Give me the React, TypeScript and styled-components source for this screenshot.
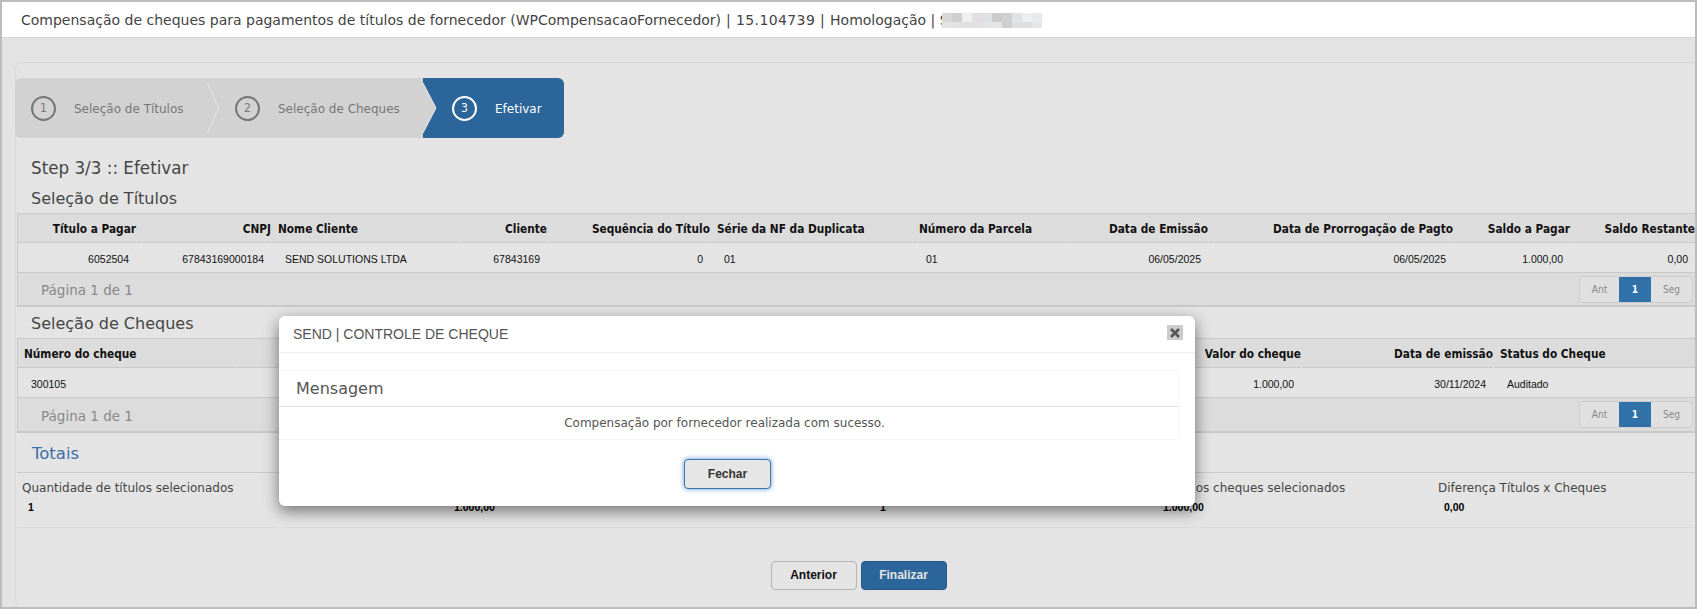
import React from "react";
import styled, { createGlobalStyle } from "styled-components";

const cond = `"DejaVu Sans Condensed", "DejaVu Sans", sans-serif`;
const sans = `"DejaVu Sans", sans-serif`;
const arial = `"Liberation Sans", Arial, sans-serif`;

const Global = createGlobalStyle`
  html, body { margin: 0; padding: 0; background: #bbb; }
  * { box-sizing: border-box; }
`;

const Page = styled.div`
  position: relative;
  width: 1697px;
  height: 609px;
  overflow: hidden;
  border: 2px solid #bcbcbc;
  background: #e3e3e3;
  font-family: ${sans};
  display: flex;
  flex-direction: column;
`;
const TopBar = styled.header`
  height: 36px;
  flex: none;
  background: #fff;
  border-bottom: 1px solid #d6d6d6;
  padding: 1px 0 0 19px;
  display: flex;
  align-items: center;
  font-size: 14px;
  color: #444;
  white-space: pre;
`;
const Version = styled.span`
  letter-spacing: 0.4px;
`;
const Mosaic = styled.span`
  position: relative;
  display: grid;
  grid-template-columns: repeat(10, 10px);
  grid-template-rows: 9px 6px;
  margin-left: -7px;
`;
const Tile = styled.i<{ $c: string }>`
  display: block;
  background: ${(p) => p.$c};
`;
const Panel = styled.main`
  margin: 24px 0 0 13px;
  flex: 1;
  min-height: 0;
  border: 1px solid #d8d8d8;
  border-right: none;
  border-bottom: none;
  border-radius: 6px 0 0 6px;
  background: #e4e4e4;
  padding-top: 15px;
  display: flex;
  flex-direction: column;
`;
const Wizard = styled.nav`
  display: flex;
  width: 549px;
  height: 60px;
  margin-left: -1px;
  flex: none;
`;
const Step = styled.div<{ $w: number; $active?: boolean; $first?: boolean }>`
  position: relative;
  width: ${(p) => p.$w}px;
  display: flex;
  align-items: center;
  background: ${(p) => (p.$active ? "#2b6599" : "#d2d2d2")};
  color: ${(p) => (p.$active ? "#fff" : "#777")};
  border-radius: ${(p) => (p.$first ? "6px 0 0 6px" : p.$active ? "0 6px 6px 0" : "0")};
  padding-left: ${(p) => (p.$first ? 16 : p.$active ? 29 : 28)}px;
  font-size: 12px;
`;
const StepLabel = styled.span`
  padding-top: 1px;
`;
const Circle = styled.span`
  width: 25px;
  height: 25px;
  border-radius: 50%;
  border: 2px solid currentColor;
  display: flex;
  align-items: center;
  justify-content: center;
  font-size: 12px;
  font-family: ${cond};
  margin-right: 18px;
`;
const Chevron = styled.svg<{ $l: number }>`
  position: absolute;
  top: 0;
  left: ${(p) => p.$l}px;
  z-index: 1;
`;
const StepTitle = styled.h2`
  margin: 19px 0 0 15px;
  font-size: 16.75px;
  line-height: 22px;
  font-weight: 400;
  color: #444;
`;
const SectionTitle = styled.h3<{ $gap: number }>`
  margin: ${(p) => p.$gap}px 0 0 15px;
  font-size: 16px;
  line-height: 22px;
  font-weight: 400;
  color: #444;
`;
const GridTable = styled.table`
  table-layout: fixed;
  border-collapse: separate;
  border-spacing: 0;
  margin: 3px 0 0 1px;
  width: 1678px;
  border-top: 1px solid #c9c9c9;
  border-left: 1px solid #c9c9c9;
  flex: none;
`;
const Th = styled.th<{ $a?: "left" | "right" }>`
  position: relative;
  height: 29px;
  padding: 2px ${(p) => (p.$a === "right" ? "1px" : "0")} 0 ${(p) => (p.$a === "right" ? "0" : "6px")};
  text-align: ${(p) => p.$a ?? "left"};
  background: #dcdcdc;
  border-bottom: 1px solid #c9c9c9;
  font-family: ${cond};
  font-size: 11.75px;
  font-weight: 700;
  color: #111;
  white-space: nowrap;
  &::after {
    content: "";
    position: absolute;
    right: -1px;
    bottom: -1px;
    width: 2px;
    height: 1px;
    background: #e6e6e6;
  }
`;
const Td = styled.td<{ $a?: "left" | "right" }>`
  height: 30px;
  padding: 2px ${(p) => (p.$a === "right" ? "8px" : "0")} 0 ${(p) => (p.$a === "right" ? "0" : "13px")};
  text-align: ${(p) => p.$a ?? "left"};
  border-bottom: 1px solid #c9c9c9;
  font-family: ${arial};
  font-size: 10.5px;
  color: #111;
  white-space: nowrap;
`;
const Pager = styled.div<{ $h: number }>`
  height: ${(p) => p.$h}px;
  margin-left: 1px;
  width: 1678px;
  flex: none;
  display: flex;
  align-items: center;
  justify-content: space-between;
  background: #dcdcdc;
  border-left: 1px solid #c9c9c9;
  border-bottom: 2px solid #c9c9c9;
  padding: 0 2px 0 23px;
  font-size: 13.5px;
  color: #888;
`;
const PagerLabel = styled.span`
  padding-top: 2px;
`;
const PageButtons = styled.div`
  display: flex;
  height: 27px;
  border: 1px solid #cdcdcd;
  border-radius: 4px;
  background: #e0e0e0;
  overflow: hidden;
`;
const PageButton = styled.span<{ $w: number; $on?: boolean }>`
  width: ${(p) => p.$w}px;
  display: flex;
  align-items: center;
  justify-content: center;
  font-family: ${cond};
  font-size: 10px;
  font-weight: ${(p) => (p.$on ? 700 : 400)};
  color: ${(p) => (p.$on ? "#fff" : "#888")};
  background: ${(p) => (p.$on ? "#3071a9" : "transparent")};
`;
const Totals = styled.section`
  margin-left: 1px;
  flex: none;
`;
const TotalsTitle = styled.h3`
  margin: 0;
  height: 40px;
  padding: 10px 0 0 15px;
  font-size: 16.5px;
  line-height: 22px;
  font-weight: 400;
  color: #3a6ea5;
  border-bottom: 1px solid #cacaca;
`;
const TotalsRow = styled.div`
  display: grid;
  grid-template-columns: 426px 426px 280px 284px 1fr;
  height: 55px;
  padding: 7px 0 0 5px;
  border-bottom: 1px solid #dcdcdc;
`;
const TotalCell = styled.div`
  display: flex;
  flex-direction: column;
`;
const TotalLabel = styled.span`
  font-size: 12px;
  line-height: 16px;
  color: #444;
  white-space: nowrap;
`;
const TotalValue = styled.strong<{ $indent: number }>`
  font-family: ${arial};
  font-size: 10.5px;
  line-height: 14px;
  margin: 4px 0 0 ${(p) => p.$indent}px;
  color: #000;
`;
const Actions = styled.div`
  display: flex;
  justify-content: center;
  gap: 4px;
  margin: 33px 0 0 0;
  padding-left: 6px;
`;
const ActionButton = styled.button<{ $primary?: boolean }>`
  width: 86px;
  height: 29px;
  border-radius: 4px;
  border: 1px solid ${(p) => (p.$primary ? "#245a8a" : "#b4b4b4")};
  background: ${(p) => (p.$primary ? "#2b6599" : "#e4e4e4")};
  color: ${(p) => (p.$primary ? "#e4e4e4" : "#111")};
  font-family: ${arial};
  font-weight: 700;
  font-size: 12px;
  padding: 0 0 2px;
`;
const Modal = styled.div`
  position: absolute;
  left: 277px;
  top: 314px;
  width: 916px;
  height: 190px;
  background: #fff;
  border-radius: 6px;
  box-shadow: 0 5px 15px rgba(0, 0, 0, 0.5);
  display: flex;
  flex-direction: column;
  z-index: 5;
`;
const ModalHead = styled.div`
  height: 37px;
  flex: none;
  border-bottom: 1px solid #eee;
  display: flex;
  align-items: center;
  justify-content: space-between;
  padding: 0 12px 0 14px;
  font-family: ${arial};
  font-size: 14px;
  color: #555;
`;
const CloseBox = styled.span`
  width: 16px;
  height: 15px;
  margin-top: -3px;
  background: #ccc;
  display: flex;
  align-items: center;
  justify-content: center;
`;
const ModalBox = styled.div`
  margin: 17px 15px 0 0;
  height: 70px;
  border: 1px solid #f6f6f6;
  border-left: none;
  border-radius: 0 4px 4px 0;
  flex: none;
`;
const ModalTitle = styled.div`
  height: 36px;
  padding: 7px 0 0 17px;
  font-size: 16px;
  line-height: 22px;
  color: #555;
  border-bottom: 1px solid #e3e3e3;
`;
const ModalText = styled.div`
  height: 32px;
  display: flex;
  align-items: center;
  justify-content: center;
  padding-right: 9px;
  font-size: 12px;
  color: #555;
`;
const ModalFoot = styled.div`
  display: flex;
  justify-content: center;
  margin-top: 19px;
  padding-right: 19px;
`;
const Fechar = styled.button`
  width: 87px;
  height: 30px;
  border-radius: 4px;
  border: 1px solid #3a78b0;
  background: #e6e6e6;
  box-shadow: 0 0 5px rgba(58, 120, 200, 0.8);
  font-family: ${arial};
  font-weight: 700;
  font-size: 12px;
  color: #333;
`;

const mosaic = [
  "#d8d8d8","#cfcfcd","#eef1f3","#e3dfe0","#dde1e5","#cdcbca","#d0d0d0","#e0e3e7","#eceef0","#e8e9ea",
  "#e4e4e4","#e2e2e2","#e0e0e0","#e2e1e1","#e3e4e5","#e6e6e2","#cfcfcf","#dedfe0","#dfdfdf","#e7e7e7",
];

const t1 = [
  ["Título a Pagar", 119, "right", "6052504"],
  ["CNPJ", 135, "right", "67843169000184"],
  ["Nome Cliente", 188, "left", "SEND SOLUTIONS LTDA"],
  ["Cliente", 88, "right", "67843169"],
  ["Sequência do Título", 163, "right", "0"],
  ["Série da NF da Duplicata", 202, "left", "01"],
  ["Número da Parcela", 158, "left", "01"],
  ["Data de Emissão", 138, "right", "06/05/2025"],
  ["Data de Prorrogação de Pagto", 245, "right", "06/05/2025"],
  ["Saldo a Pagar", 117, "right", "1.000,00"],
  ["Saldo Restante", 125, "right", "0,00"],
] as const;

const t2 = [
  ["Número do cheque", 218, "left", "300105"],
  ["", 955, "left", ""],
  ["Valor do cheque", 111, "right", "1.000,00"],
  ["Data de emissão", 192, "right", "30/11/2024"],
  ["Status do Cheque", 202, "left", "Auditado"],
] as const;

const totals = [
  ["Quantidade de títulos selecionados", "1", 6],
  ["Valor dos títulos selecionados", "1.000,00", 6],
  ["Quantidade de cheques selecionados", "1", 6],
  ["Valor dos cheques selecionados", "1.000,00", 9],
  ["Diferença Títulos x Cheques", "0,00", 6],
] as const;

function DataTable({ cols }: { cols: readonly (readonly [string, number, "left" | "right", string])[] }) {
  return (
    <GridTable>
      <colgroup>
        {cols.map((c, i) => (
          <col key={i} width={c[1]} />
        ))}
      </colgroup>
      <thead>
        <tr>
          {cols.map((c, i) => (
            <Th key={i} $a={c[2]}>{c[0]}</Th>
          ))}
        </tr>
      </thead>
      <tbody>
        <tr>
          {cols.map((c, i) => (
            <Td key={i} $a={c[2]}>{c[3]}</Td>
          ))}
        </tr>
      </tbody>
    </GridTable>
  );
}

function PagerBar({ h }: { h: number }) {
  return (
    <Pager $h={h}>
      <PagerLabel>Página 1 de 1</PagerLabel>
      <PageButtons>
        <PageButton $w={39}>Ant</PageButton>
        <PageButton $w={32} $on>1</PageButton>
        <PageButton $w={41}>Seg</PageButton>
      </PageButtons>
    </Pager>
  );
}

export default function App() {
  return (
    <Page>
      <Global />
      <TopBar>
        Compensação de cheques para pagamentos de títulos de fornecedor (WPCompensacaoFornecedor)
        <Version> | 15.104739 | </Version>
        Homologação | S
        <Mosaic>
          {mosaic.map((c, i) => (
            <Tile key={i} $c={c} />
          ))}
        </Mosaic>
      </TopBar>
      <Panel>
        <Wizard>
          <Step $w={192} $first>
            <Circle>1</Circle>
            <StepLabel>Seleção de Títulos</StepLabel>
            <Chevron $l={191} width="14" height="60" viewBox="0 0 14 60">
              <path d="M1 5 L13 30 L1 55" fill="none" stroke="#e6e6e6" strokeWidth="1" />
            </Chevron>
          </Step>
          <Step $w={216}>
            <Circle>2</Circle>
            <StepLabel>Seleção de Cheques</StepLabel>
            <Chevron $l={216} width="14" height="60" viewBox="0 0 14 60">
              <path d="M0 5 L13 30 L0 55 Z" fill="#d2d2d2" />
              <path d="M0 5 L13 30 L0 55" fill="none" stroke="#e6e6e6" strokeWidth="1" />
            </Chevron>
          </Step>
          <Step $w={141} $active>
            <Circle>3</Circle>
            <StepLabel>Efetivar</StepLabel>
          </Step>
        </Wizard>
        <StepTitle>Step 3/3 :: Efetivar</StepTitle>
        <SectionTitle $gap={9}>Seleção de Títulos</SectionTitle>
        <DataTable cols={t1} />
        <PagerBar h={34} />
        <SectionTitle $gap={6}>Seleção de Cheques</SectionTitle>
        <DataTable cols={t2} />
        <PagerBar h={35} />
        <Totals>
          <TotalsTitle>Totais</TotalsTitle>
          <TotalsRow>
            {totals.map(([l, v, indent]) => (
              <TotalCell key={l}>
                <TotalLabel>{l}</TotalLabel>
                <TotalValue $indent={indent}>{v}</TotalValue>
              </TotalCell>
            ))}
          </TotalsRow>
        </Totals>
        <Actions>
          <ActionButton>Anterior</ActionButton>
          <ActionButton $primary>Finalizar</ActionButton>
        </Actions>
      </Panel>
      <Modal>
        <ModalHead>
          SEND | CONTROLE DE CHEQUE
          <CloseBox>
            <svg width="10" height="10" viewBox="0 0 10 10">
              <path d="M1 1 L9 9 M9 1 L1 9" stroke="#555" strokeWidth="2.6" />
            </svg>
          </CloseBox>
        </ModalHead>
        <ModalBox>
          <ModalTitle>Mensagem</ModalTitle>
          <ModalText>Compensação por fornecedor realizada com sucesso.</ModalText>
        </ModalBox>
        <ModalFoot>
          <Fechar>Fechar</Fechar>
        </ModalFoot>
      </Modal>
    </Page>
  );
}
